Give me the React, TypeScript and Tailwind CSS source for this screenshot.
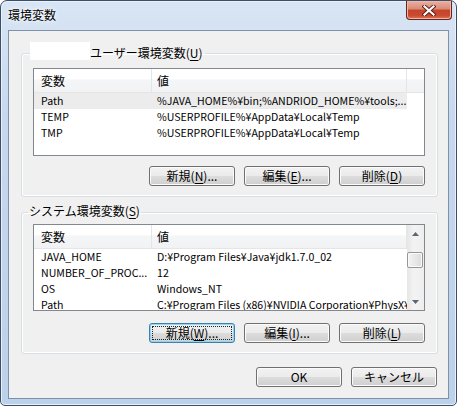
import clsx from "clsx";

type Row = { name: string; value: string };

const userVars: Row[] = [
  { name: "Path", value: "%JAVA_HOME%¥bin;%ANDRIOD_HOME%¥tools;..." },
  { name: "TEMP", value: "%USERPROFILE%¥AppData¥Local¥Temp" },
  { name: "TMP", value: "%USERPROFILE%¥AppData¥Local¥Temp" },
];

const systemVars: Row[] = [
  { name: "JAVA_HOME", value: "D:¥Program Files¥Java¥jdk1.7.0_02" },
  { name: "NUMBER_OF_PROC...", value: "12" },
  { name: "OS", value: "Windows_NT" },
  { name: "Path", value: "C:¥Program Files (x86)¥NVIDIA Corporation¥PhysX¥Common;..." },
];

function Btn({
  pre,
  k,
  post,
  focused,
}: {
  pre: string;
  k?: string;
  post?: string;
  focused?: boolean;
}) {
  return (
    <button
      type="button"
      className={clsx(
        "flex h-[20px] w-[86px] rounded-[3px] border p-[2px] text-[12px] leading-none text-black",
        "bg-[linear-gradient(#f2f2f2,#ebebeb_50%,#dddddd_50%,#cfcfcf)]",
        focused
          ? "border-[#3c7fb1] shadow-[inset_0_0_0_1px_#8fd6f5]"
          : "border-[#707070] shadow-[inset_0_0_0_1px_#fbfbfb]"
      )}
    >
      <span
        className={clsx(
          "flex flex-1 items-center justify-center border border-dotted",
          focused ? "border-[#222]" : "border-transparent"
        )}
      >
        {pre}
        {k ? <span className="underline underline-offset-[2px]">{k}</span> : null}
        {post}
      </span>
    </button>
  );
}

function Arrow({ down }: { down?: boolean }) {
  return (
    <div className="flex h-[17px] items-center justify-center">
      <svg width="7" height="4" viewBox="0 0 7 4">
        <polygon points={down ? "0,0 7,0 3.5,4" : "0,4 7,4 3.5,0"} fill="#5b6778" />
      </svg>
    </div>
  );
}

function VarList({
  rows,
  selected,
  scroll,
  height,
}: {
  rows: Row[];
  selected?: number;
  scroll?: boolean;
  height: string;
}) {
  return (
    <div className={clsx("flex w-[392px] border border-[#828790] bg-white", height)}>
      <div className="flex flex-1 flex-col overflow-hidden">
        <div className="flex h-[24px] shrink-0 border-b border-[#e5e5e5] bg-[linear-gradient(#ffffff,#ffffff_45%,#f5f6f7_46%,#f1f2f4)]">
          <div className="flex w-[118px] items-center border-r border-[#e3e5e8] pl-[7px] pt-px">変数</div>
          <div className="flex w-[255px] items-center border-r border-[#e3e5e8] pl-[5px] pt-px">値</div>
          <div className="flex-1" />
        </div>
        {rows.map((r, i) => (
          <div key={r.name} className="flex h-[16px] shrink-0 items-center text-[10.6px]">
            <div className={clsx("flex h-full w-[373px] items-center", i === selected && "bg-[#ececec]")}>
              <div className="w-[118px] overflow-hidden whitespace-nowrap pl-[7px]">{r.name}</div>
              <div className="w-[255px] overflow-hidden whitespace-nowrap pl-[5px]">{r.value}</div>
            </div>
          </div>
        ))}
      </div>
      {scroll ? (
        <div className="flex w-[17px] flex-col bg-[linear-gradient(90deg,#e6e6e6,#f3f3f3_40%,#eeeeee)]">
          <Arrow />
          <div className="mt-[10px] h-[16px] w-[16px] rounded-[2px] border border-[#979797] bg-[linear-gradient(90deg,#f4f4f4,#e8e8e8_50%,#dcdcdc)] shadow-[inset_0_0_0_1px_#fafafa]" />
          <div className="flex-1" />
          <Arrow down />
        </div>
      ) : null}
    </div>
  );
}

export default function App() {
  return (
    <div className="font-['Noto_Sans_CJK_JP','Noto_Sans',sans-serif] text-[12px] leading-[16px] text-black">
      <div className="flex h-[406px] w-[457px] flex-col rounded-t-[7px] rounded-b-[5px] border border-[#3d4f68] bg-[linear-gradient(#d8e5f4,#c6d8ee_30%,#bcd1ea)] px-[7px] pb-[6px] shadow-[inset_0_0_0_1px_#eaf1fa]">
        <div className="flex h-[29px] shrink-0 items-start justify-between">
          <span className="pt-[6px] [text-shadow:0_0_6px_#ffffff,0_0_3px_#ffffff]">環境変数</span>
          <button
            type="button"
            className="-mr-[3px] flex h-[19px] w-[46px] items-center justify-center rounded-b-[4px] border border-t-0 border-[#6a2318] bg-[linear-gradient(#eab0a3,#d98a78_45%,#c4442c_50%,#c94a31_80%,#db7459)] shadow-[inset_0_0_0_1px_#f1b8a8]"
          >
            <svg width="14" height="11" viewBox="0 0 14 11">
              <path d="M2.5 1.5 L11.5 9.5 M11.5 1.5 L2.5 9.5" stroke="#5a1c12" strokeWidth="4" strokeLinecap="square" />
              <path d="M2.5 1.5 L11.5 9.5 M11.5 1.5 L2.5 9.5" stroke="#ffffff" strokeWidth="2.2" strokeLinecap="square" />
            </svg>
          </button>
        </div>

        <div className="flex h-[369px] flex-col border border-[#7f91a8] bg-[#f0f0f0] pl-[12px] pr-[11px] pt-[13px]">
          <fieldset className="rounded-[3px] border border-[#d5dfe5] pb-[10px] shadow-[inset_0_0_0_1px_#ffffff]">
            <legend className="ml-[8px] flex h-[18px] items-center pr-[2px]">
              <span className="h-[18px] w-[60px] -translate-y-[2px] bg-white" />
              <span>
                ユーザー環境変数(<span className="underline underline-offset-[2px]">U</span>)
              </span>
            </legend>
            <div className="flex flex-col pl-[11px] pr-[12px] pt-[6px]">
              <VarList rows={userVars} selected={0} height="h-[88px]" />
              <div className="mt-[10px] flex justify-end gap-[9px]">
                <Btn pre="新規(" k="N" post=")..." />
                <Btn pre="編集(" k="E" post=")..." />
                <Btn pre="削除(" k="D" post=")" />
              </div>
            </div>
          </fieldset>

          <fieldset className="mt-[6px] rounded-[3px] border border-[#d5dfe5] pb-[10px] shadow-[inset_0_0_0_1px_#ffffff]">
            <legend className="ml-[6px] h-[18px] px-px">
              システム環境変数(<span className="underline underline-offset-[2px]">S</span>)
            </legend>
            <div className="flex flex-col pl-[11px] pr-[12px] pt-[3px]">
              <VarList rows={systemVars} scroll height="h-[87px]" />
              <div className="mt-[12px] flex justify-end gap-[9px]">
                <Btn pre="新規(" k="W" post=")..." focused />
                <Btn pre="編集(" k="I" post=")..." />
                <Btn pre="削除(" k="L" post=")" />
              </div>
            </div>
          </fieldset>

          <div className="mt-[13px] flex justify-end gap-[9px]">
            <Btn pre="OK" />
            <Btn pre="キャンセル" />
          </div>
        </div>
      </div>
    </div>
  );
}
